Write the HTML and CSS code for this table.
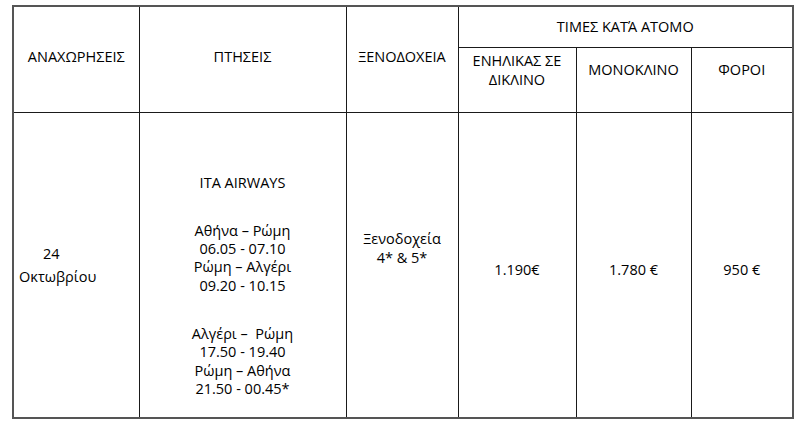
FILE: index.html
```html
<!DOCTYPE html>
<html lang="el">
<head>
<meta charset="utf-8">
<link rel="stylesheet" href="styles.css">
</head>
<body>
<table class="tour">
  <colgroup>
    <col class="c1"><col class="c2"><col class="c3"><col class="c4"><col class="c5"><col class="c6">
  </colgroup>
  <thead>
    <tr class="r1">
      <th rowspan="2" class="span">ΑΝΑΧΩΡΗΣΕΙΣ</th>
      <th rowspan="2" class="span">ΠΤΗΣΕΙΣ</th>
      <th rowspan="2" class="span">ΞΕΝΟΔΟΧΕΙΑ</th>
      <th colspan="3">ΤΙΜΕΣ ΚΑΤΆ ΑΤΟΜΟ</th>
    </tr>
    <tr class="r2">
      <th>ΕΝΗΛΙΚΑΣ ΣΕ<br>ΔΙΚΛΙΝΟ</th>
      <th>ΜΟΝΟΚΛΙΝΟ</th>
      <th>ΦΟΡΟΙ</th>
    </tr>
  </thead>
  <tbody>
    <tr class="r3">
      <td class="date"><span class="day">24</span><br>Οκτωβρίου</td>
      <td class="flights">
        <p>ITA AIRWAYS</p>
        <p>Αθήνα – Ρώμη<br>06.05 - 07.10<br>Ρώμη – Αλγέρι<br>09.20 - 10.15</p>
        <p>Αλγέρι –&nbsp; Ρώμη<br>17.50 - 19.40<br>Ρώμη – Αθήνα<br>21.50 - 00.45*</p>
      </td>
      <td class="hotel">Ξενοδοχεία<br>4* &amp; 5*</td>
      <td class="price">1.190€</td>
      <td class="price">1.780 €</td>
      <td class="price">950 €</td>
    </tr>
  </tbody>
</table>
</body>
</html>
```

FILE: styles.css
```css
html, body {
  margin: 0;
  padding: 0;
  background: #fff;
}
body {
  padding: 5px 0 0 12px;
  font-family: "Open Sans", "Noto Sans", sans-serif;
  font-size: 14.5px;
  color: #000;
}
.tour {
  border-collapse: collapse;
  table-layout: fixed;
  width: 782px;
  border: 2px solid #555;
}
.c1 { width: 126px; }
.c2 { width: 207px; }
.c3 { width: 112px; }
.c4 { width: 118px; }
.c5 { width: 115px; }
.c6 { width: 102px; }
.tour th, .tour td {
  border: 1px solid #1a1a1a;
  text-align: center;
  vertical-align: middle;
  padding: 0 2px;
  font-weight: 500;
  line-height: 18.3px;
}
.r1 { height: 41px; }
.r2 { height: 65px; }
.r3 { height: 306px; }
.tour th.span { padding-bottom: 4px; }
.r2 th { padding-bottom: 18px; }
.tour td.date {
  text-align: left;
  padding-left: 5px;
  line-height: 23px;
}
.day { padding-left: 24px; }
.tour td.flights {
  vertical-align: top;
  padding-top: 61px;
}
.flights p {
  margin: 0 0 30px;
}
.flights p:last-child { margin-bottom: 0; }
.tour td.hotel { padding-bottom: 32px; }
.tour td.price { padding-top: 10px; }
```
